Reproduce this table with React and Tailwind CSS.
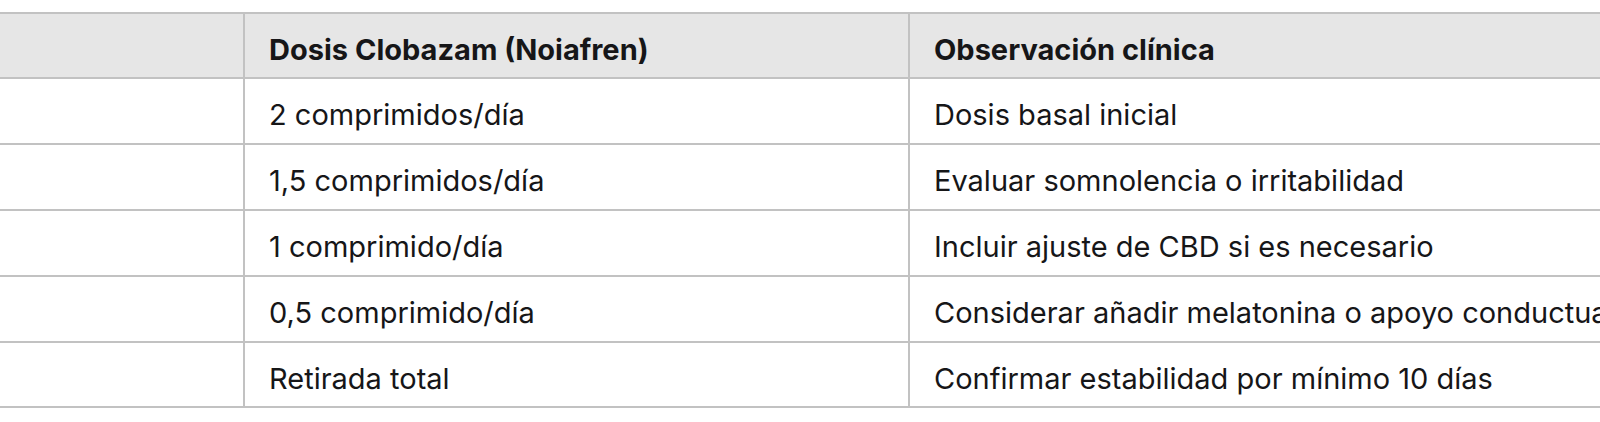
import React from 'react';

const rows = [
  { dose: '2 comprimidos/día', note: 'Dosis basal inicial', h: 'h-[64px]' },
  { dose: '1,5 comprimidos/día', note: 'Evaluar somnolencia o irritabilidad', h: 'h-[64px]' },
  { dose: '1 comprimido/día', note: 'Incluir ajuste de CBD si es necesario', h: 'h-[64px]' },
  { dose: '0,5 comprimido/día', note: 'Considerar añadir melatonina o apoyo conductual', h: 'h-[64px]' },
  { dose: 'Retirada total', note: 'Confirmar estabilidad por mínimo 10 días', h: 'h-[63px]' },
];

function Row({ cells, head, h }) {
  return (
    <div className={`flex border-b-2 border-[#c2c2c2] ${head ? 'bg-[#e6e6e6]' : 'bg-white'}`}>
      <div className={`w-[245px] shrink-0 border-r-2 border-[#c2c2c2] ${h}`} />
      <div className={`w-[665px] shrink-0 border-r-2 border-[#c2c2c2] px-6 pt-2 flex items-center whitespace-nowrap ${h}`}>
        {cells[0]}
      </div>
      <div className={`w-[900px] shrink-0 px-6 pt-2 flex items-center whitespace-nowrap ${h}`}>
        {cells[1]}
      </div>
    </div>
  );
}

export default function App() {
  return (
    <div className="w-[1600px] h-[422px] overflow-hidden bg-white text-[#161618] text-[29px] font-['Inter','Liberation_Sans',sans-serif]">
      <div className="mt-[12px] w-[1810px] border-t-2 border-[#c2c2c2]">
        <div className="font-bold">
          <Row head h="h-[63px]" cells={['Dosis Clobazam (Noiafren)', 'Observación clínica']} />
        </div>
        {rows.map(r => (
          <Row key={r.dose} h={r.h} cells={[r.dose, r.note]} />
        ))}
      </div>
    </div>
  );
}
